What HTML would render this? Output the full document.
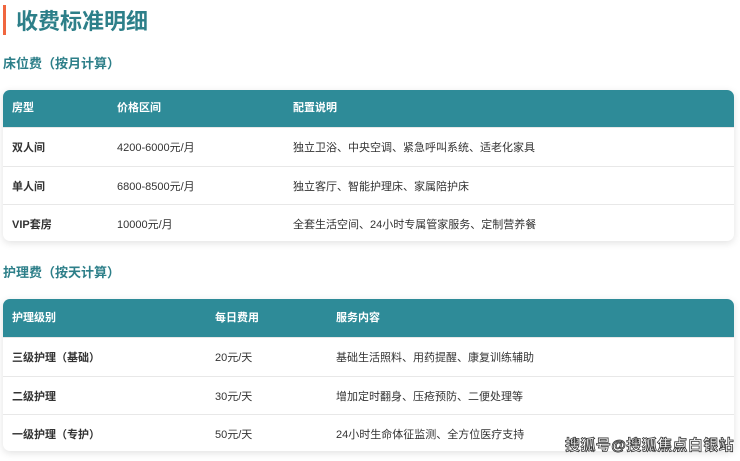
<!DOCTYPE html>
<html><head><meta charset="utf-8"><style>
*{margin:0;padding:0;box-sizing:border-box}
body{width:740px;height:461px;background:#fff;font-family:"Liberation Sans","Noto Sans CJK SC",sans-serif;position:relative;overflow:hidden;color:#333}
.bar{position:absolute;left:3px;top:5px;width:3px;height:30px;background:#f0663f}
h1{position:absolute;left:16px;top:7px;font-size:22px;font-weight:bold;color:#2d7f89;line-height:30px}
h2{position:absolute;left:3px;font-size:13px;font-weight:bold;color:#2d7f89;line-height:18px}
.tbl{position:absolute;left:3px;width:731px;border-radius:7px;overflow:hidden;box-shadow:0 2px 8px rgba(0,0,0,.12);background:#fff}
.hd{background:#2e8b98;color:#fff;font-weight:bold;height:37px;position:relative;font-size:11px}
.row{height:38px;position:relative;border-top:1px solid #e8e8e8;font-size:11px}
.c{position:absolute;top:1px;line-height:38px;white-space:nowrap}
.hd .c{top:0;line-height:37px}
.b{font-weight:bold;color:#333}
.wm{position:absolute;left:565px;top:434px;font-size:15px;font-weight:bold;color:#fff;-webkit-text-stroke:0.8px #333;letter-spacing:0.4px}
</style></head><body>
<div class="bar"></div>
<h1>收费标准明细</h1>
<h2 style="top:55px">床位费（按月计算）</h2>
<div class="tbl" style="top:90px">
<div class="hd"><span class="c" style="left:9px">房型</span><span class="c" style="left:114px">价格区间</span><span class="c" style="left:290px">配置说明</span></div>
<div class="row" style="height:39px"><span class="c b" style="left:9px">双人间</span><span class="c" style="left:114px">4200-6000元/月</span><span class="c" style="left:290px">独立卫浴、中央空调、紧急呼叫系统、适老化家具</span></div>
<div class="row"><span class="c b" style="left:9px">单人间</span><span class="c" style="left:114px">6800-8500元/月</span><span class="c" style="left:290px">独立客厅、智能护理床、家属陪护床</span></div>
<div class="row" style="height:37px"><span class="c b" style="left:9px">VIP套房</span><span class="c" style="left:114px">10000元/月</span><span class="c" style="left:290px">全套生活空间、24小时专属管家服务、定制营养餐</span></div>
</div>
<h2 style="top:264px">护理费（按天计算）</h2>
<div class="tbl" style="top:299px">
<div class="hd" style="height:38px"><span class="c" style="left:9px;line-height:38px">护理级别</span><span class="c" style="left:212px;line-height:38px">每日费用</span><span class="c" style="left:333px;line-height:38px">服务内容</span></div>
<div class="row" style="height:39px"><span class="c b" style="left:9px">三级护理（基础）</span><span class="c" style="left:212px">20元/天</span><span class="c" style="left:333px">基础生活照料、用药提醒、康复训练辅助</span></div>
<div class="row"><span class="c b" style="left:9px">二级护理</span><span class="c" style="left:212px">30元/天</span><span class="c" style="left:333px">增加定时翻身、压疮预防、二便处理等</span></div>
<div class="row" style="height:37px"><span class="c b" style="left:9px">一级护理（专护）</span><span class="c" style="left:212px">50元/天</span><span class="c" style="left:333px">24小时生命体征监测、全方位医疗支持</span></div>
</div>
<div class="wm">搜狐号@搜狐焦点白银站</div>
</body></html>
